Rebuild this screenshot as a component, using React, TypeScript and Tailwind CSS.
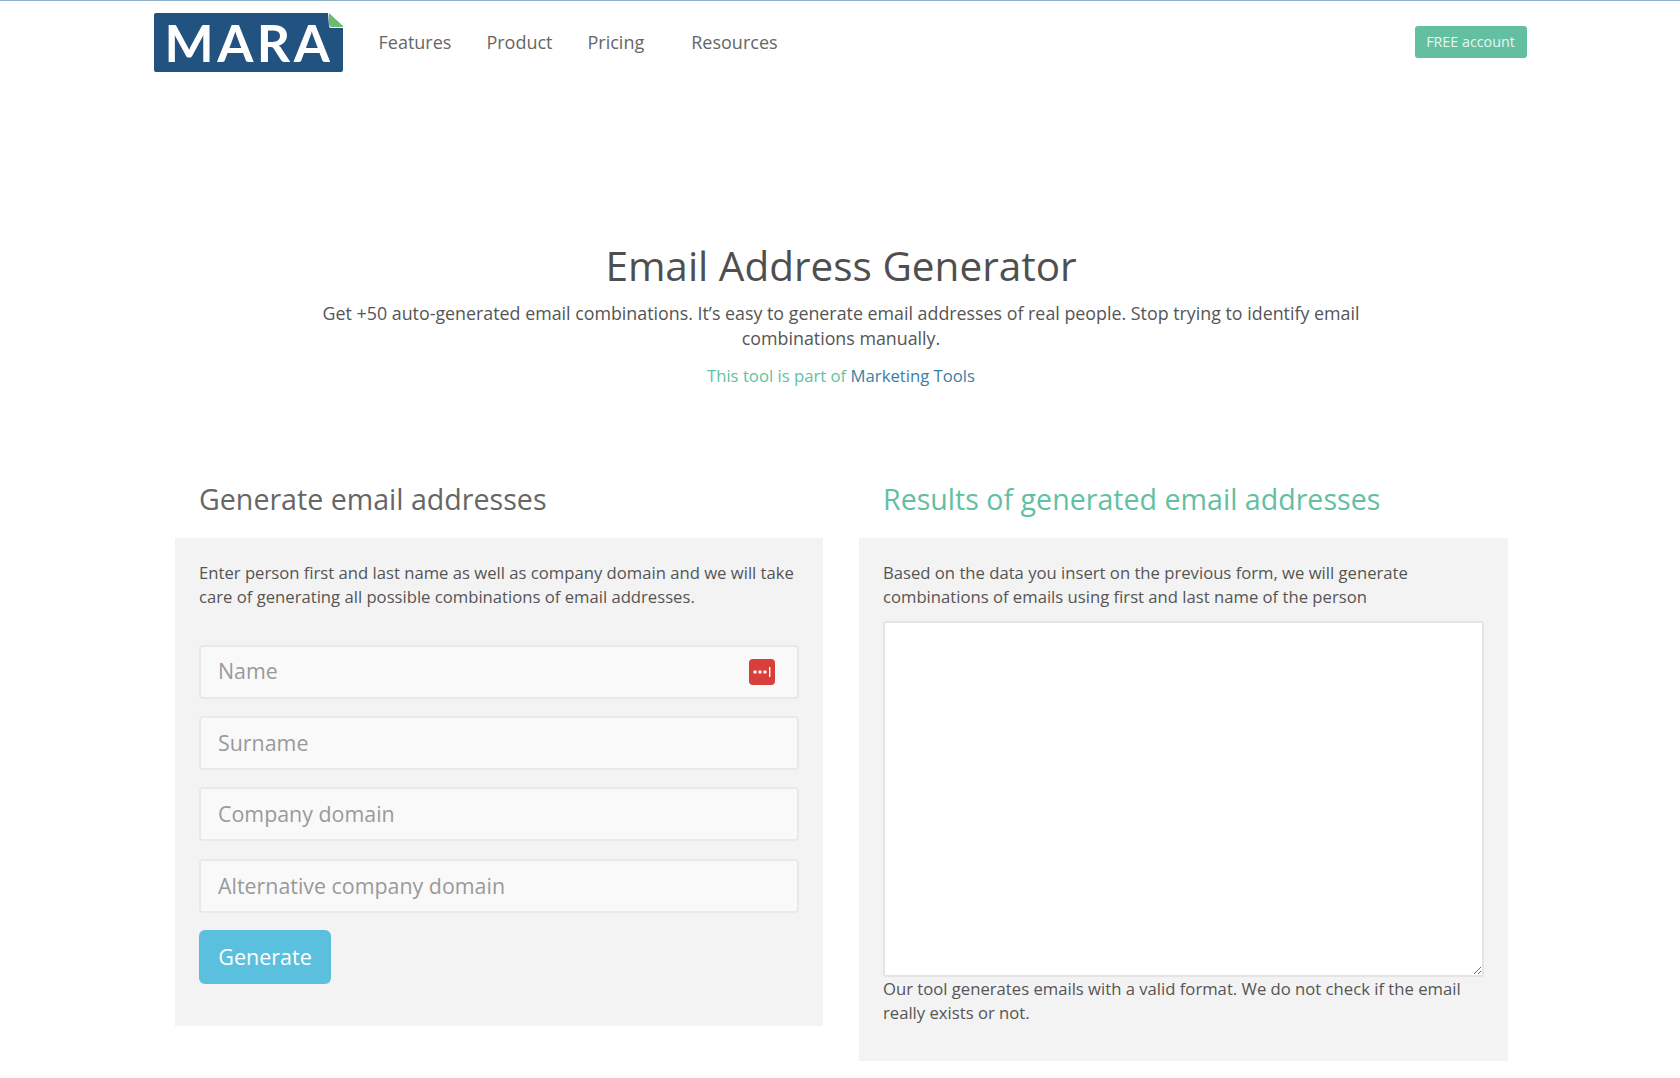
export default function App() {
  const fields = ["Surname", "Company domain", "Alternative company domain"];
  return (
    <div className="min-h-[1078px] bg-white font-['Open_Sans',sans-serif] text-[#555] border-t border-[#8fb0c8]">
      <header className="mx-auto flex h-[82px] w-[1373px] items-center justify-between">
        <div className="flex items-center">
          <div className="relative flex h-[59px] w-[189px] items-center justify-center rounded-[2px] bg-[#22527f] pl-[2px] font-['Lato',sans-serif] text-[52px] font-bold tracking-[3.5px] text-white">
            MARA
            <svg className="absolute right-0 top-0" width="15" height="15" viewBox="0 0 15 15">
              <path d="M0 0H15V15H3Q1 15 1 13Z" fill="#fff" />
              <path d="M1 0L15 13V14H4Q1 14 1 11Z" fill="#6dbb6e" />
            </svg>
          </div>
          <nav className="ml-[36px] flex text-[18px] text-[#666]">
            <a className="mr-[35px]">Features</a>
            <a className="mr-[35px]">Product</a>
            <a className="mr-[47px]">Pricing</a>
            <a>Resources</a>
          </nav>
        </div>
        <a className="flex h-[32px] w-[112px] items-center justify-center rounded-[3px] bg-[#63bfa2] text-[14.3px] text-[#e6f6f0]">FREE account</a>
      </header>

      <section className="mt-[156px] pl-[2px] text-center">
        <h1 className="text-[40.5px] leading-[54px] text-[#4f4f4f]">Email Address Generator</h1>
        <p className="mx-auto mt-[8px] w-[1060px] text-[17.84px] leading-[24.5px]">
          Get +50 auto-generated email combinations. It’s easy to generate email addresses of real people. Stop trying to identify email combinations manually.
        </p>
        <p className="mt-[13.5px] text-[16.7px] leading-[24px] text-[#63bfa2]">
          This tool is part of <a className="text-[#3b7ea8]">Marketing Tools</a>
        </p>
      </section>

      <main className="ml-[175px] mt-[92.5px] flex w-[1333px] items-start gap-[36px]">
        <div className="w-[648px]">
          <h2 className="px-[24px] text-[28.6px] leading-[38px] text-[#666]">Generate email addresses</h2>
          <div className="mt-[20px] h-[488px] bg-[#f3f3f3] px-[24px] pt-[23px]">
            <p className="text-[16.66px] leading-[24px]">
              Enter person first and last name as well as company domain and we will take care of generating all possible combinations of email addresses.
            </p>
            <div className="relative mt-[35.5px]">
              <div className="flex h-[54px] items-center rounded-[4px] border-2 border-[#e9e9e9] bg-[#f9f9f9] px-[17px] text-[21.4px] text-[#999]">Name</div>
              <svg className="absolute right-[24px] top-[14px]" width="26" height="26" viewBox="0 0 26 26">
                <rect width="26" height="26" rx="4" fill="#d93f3a" />
                <circle cx="6" cy="13" r="1.7" fill="#fff" />
                <circle cx="11" cy="13" r="1.7" fill="#fff" />
                <circle cx="16" cy="13" r="1.7" fill="#fff" />
                <rect x="20" y="8" width="1.4" height="10" fill="#fff" />
              </svg>
            </div>
            {fields.map((f) => (
              <div key={f} className="mt-[17.4px] flex h-[54px] items-center rounded-[4px] border-2 border-[#e9e9e9] bg-[#f9f9f9] px-[17px] text-[21.4px] text-[#999]">{f}</div>
            ))}
            <button className="mt-[17px] h-[54px] w-[132px] rounded-[6px] bg-[#5bc0de] text-[21.5px] text-white">Generate</button>
          </div>
        </div>
        <div className="w-[649px]">
          <h2 className="px-[24px] text-[28.6px] leading-[38px] text-[#63bfa2]">Results of generated email addresses</h2>
          <div className="mt-[20px] h-[523px] bg-[#f3f3f3] px-[24px] pt-[23px]">
            <p className="text-[16.66px] leading-[24px]">
              Based on the data you insert on the previous form, we will generate combinations of emails using first and last name of the person
            </p>
            <textarea className="mt-[11.5px] block h-[356px] w-[601px] rounded-[3px] border-2 border-[#e4e4e4] bg-white" />
            <p className="text-[16.66px] leading-[24px]">
              Our tool generates emails with a valid format. We do not check if the email really exists or not.
            </p>
          </div>
        </div>
      </main>
    </div>
  );
}
